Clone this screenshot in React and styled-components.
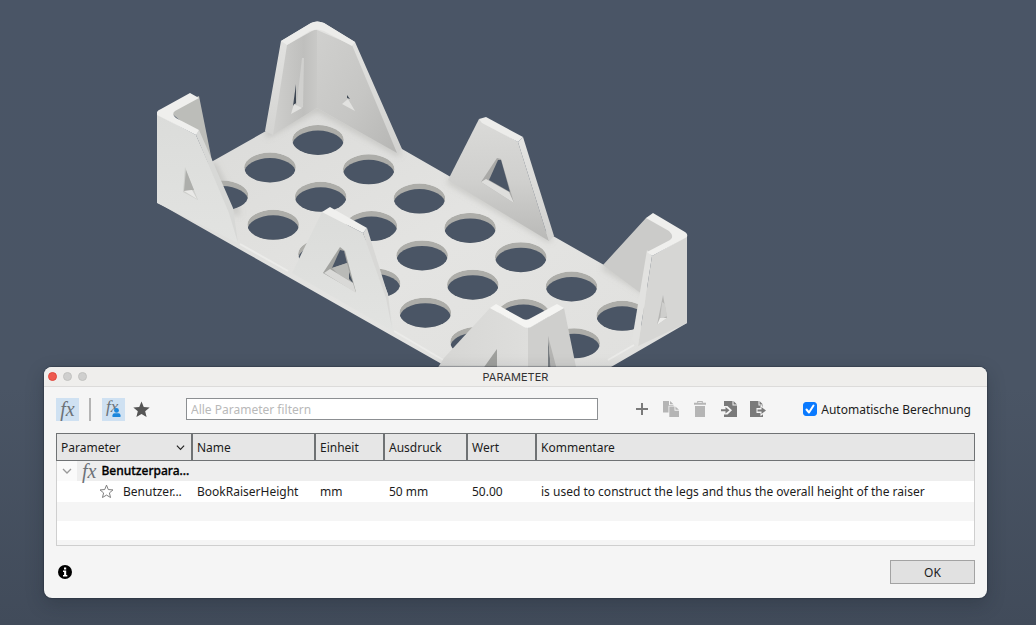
import { useState } from 'react'
import styled, { createGlobalStyle } from 'styled-components'

const GlobalStyle = createGlobalStyle`
	* {
		box-sizing: border-box;
	}
	body {
		margin: 0;
		background: #4a5565;
		font-family: 'Noto Sans', 'Open Sans', sans-serif;
		font-size: 12px;
		color: #1c1c1c;
	}
	button,
	input {
		font: inherit;
		color: inherit;
	}
`

const Viewport = styled.main`
	position: relative;
	min-height: 100vh;
	padding: 0 49px 27px 44px;
	display: flex;
	flex-direction: column;
	justify-content: flex-end;
	overflow: hidden;
	background: linear-gradient(#4a5566 0%, #4a5565 62%, #414b5a 100%);
`

const Model = styled.svg`
	position: absolute;
	top: 0;
	left: 0;
`

const Dialog = styled.section`
	position: relative;
	border-radius: 8px;
	background: #f5f5f5;
	box-shadow: 0 0 1px 1px rgba(30, 36, 48, 0.35), 0 6px 18px rgba(20, 26, 36, 0.25);
	overflow: hidden;
`

const TitleBar = styled.header`
	height: 20px;
	padding: 0 4px;
	display: grid;
	grid-template-columns: 1fr auto 1fr;
	align-items: center;
	background: #efeeec;
	border-bottom: 1px solid #dcdbda;
`

const Lights = styled.div`
	display: flex;
	gap: 6px;
`

const Light = styled.button`
	width: 9px;
	height: 9px;
	padding: 0;
	border: 1px solid ${({ $close }) => ($close ? '#e0483e' : '#c2c2c1')};
	border-radius: 50%;
	background: ${({ $close }) => ($close ? '#ee5a50' : '#cfcfce')};
`

const Title = styled.h1`
	margin: 0;
	font-family: Inter, sans-serif;
	font-size: 11px;
	font-weight: 400;
	line-height: 16px;
	color: #333;
`

const Toolbar = styled.div`
	height: 46px;
	padding: 0 16px 2px 12px;
	display: flex;
	align-items: center;
`

const IconButton = styled.button`
	position: relative;
	flex: none;
	width: 23px;
	height: 23px;
	padding: 0;
	display: grid;
	place-items: ${({ $corner }) => ($corner ? 'start' : 'center')};
	padding-left: ${({ $corner }) => ($corner ? 4 : 0)}px;
	border: 0;
	color: #555;
	background: ${({ $active }) => ($active ? '#cfe1f2' : 'transparent')};
`

const Fx = styled.span`
	font-family: 'Liberation Serif', serif;
	font-style: italic;
	font-size: ${({ $size }) => $size}px;
	font-weight: 400;
	line-height: ${({ $size }) => $size}px;
	color: #6c7278;
`

const UserBadge = styled.svg`
	position: absolute;
	right: 4px;
	bottom: 4px;
`

const Divider = styled.span`
	width: 2px;
	height: 23px;
	margin: 0 11px 0 10px;
	background: #b4b4b4;
`

const Favorites = styled(IconButton)`
	margin-left: 5px;
`

const Filter = styled.input`
	flex: 1;
	min-width: 80px;
	height: 22px;
	margin: 0 32px 0 33px;
	padding: 0 4px;
	border: 1px solid #8c8f92;
	border-radius: 0;
	background: #fff;
	outline: none;
	&::placeholder {
		color: #b9b9b9;
		opacity: 1;
	}
`

const Tools = styled.div`
	display: flex;
	gap: 6px;
	margin-right: 34px;
	button {
		color: #7a7a7a;
	}
	button:disabled {
		color: #b5b5b5;
	}
`

const AutoLabel = styled.label`
	display: flex;
	align-items: center;
	gap: 4px;
	white-space: nowrap;
`

const CheckWrap = styled.span`
	display: grid;
	input,
	svg {
		grid-area: 1 / 1;
	}
	svg {
		pointer-events: none;
	}
`

const Checkbox = styled.input`
	appearance: none;
	width: 14px;
	height: 14px;
	margin: 0;
	border: 1px solid #aaa;
	border-radius: 3px;
	background: #fff;
	&:checked {
		border-color: #0a7aff;
		background: #0a7aff;
	}
`

const TableFrame = styled.div`
	margin: 0 12px;
	height: 113px;
	overflow: hidden;
	border-bottom: 1px solid #cfcfcf;
`

const Table = styled.table`
	width: 100%;
	height: 118px;
	table-layout: fixed;
	border-collapse: separate;
	border-spacing: 0;
	tbody td:first-child {
		border-left: 1px solid #cfcfcf;
	}
	tbody td:last-child {
		border-right: 1px solid #cfcfcf;
	}
`

const HeadCell = styled.th`
	width: ${({ $width }) => $width || 'auto'};
	height: 28px;
	padding: 0 6px 0 4px;
	border: solid #6f7274;
	border-width: 1px 0 1px 2px;
	background: #e6e6e6;
	font-weight: 400;
	text-align: left;
	&:first-child {
		border-left-width: 1px;
	}
	&:last-child {
		border-right-width: 1px;
	}
`

const HeadLabel = styled.span`
	display: flex;
	align-items: center;
	justify-content: space-between;
`

const Row = styled.tr`
	height: ${({ $height }) => $height}px;
	background: ${({ $shade }) => $shade};
`

const Cell = styled.td`
	padding: 0 0 0 6px;
	line-height: 18px;
	white-space: nowrap;
`

const TreeCell = styled.td`
	padding: 0;
	line-height: 18px;
`

const TreeItem = styled.div`
	display: flex;
	align-items: center;
	gap: ${({ $gap }) => $gap}px;
	padding-left: ${({ $indent }) => $indent}px;
`

const GroupName = styled.span`
	font-weight: 500;
	-webkit-text-stroke: 0.3px #000;
	color: #000;
`

const Twisty = styled.button`
	width: 20px;
	height: 20px;
	padding: 0;
	display: grid;
	place-items: center;
	border: 0;
	background: #fafafa;
`

const Footer = styled.footer`
	padding: 14px 12px;
	display: flex;
	align-items: center;
	justify-content: space-between;
`

const InfoButton = styled.button`
	width: 17px;
	height: 17px;
	padding: 0;
	display: grid;
	place-items: center;
	border: 0;
	background: none;
`

const OkButton = styled.button`
	width: 85px;
	height: 24px;
	padding: 0;
	border: 1px solid #a3a3a3;
	background: #e1e1e1;
`

const STAR = 'M8 1.2l1.9 4.7 5 .4-3.8 3.2 1.2 4.9L8 11.8l-4.3 2.6 1.2-4.9L1.1 6.3l5-.4z'

const holes = [
	{ x: 318, y: 140, count: 7 },
	{ x: 270, y: 167.5, count: 7 },
	{ x: 222.5, y: 195.5, count: 6 },
].flatMap(({ x, y, count }) =>
	Array.from({ length: count }, (_, i) => ({ x: x + i * 50.7, y: y + i * 29.3 })),
)

function BookRaiser() {
	return (
		<Model width="1036" height="625" viewBox="0 0 1036 625" aria-hidden="true">
			<defs>
				<linearGradient id="plate" x1="0" y1="0" x2="1" y2="1">
					<stop offset="0" stopColor="#dadad8" />
					<stop offset="0.5" stopColor="#e4e4e2" />
					<stop offset="1" stopColor="#dfdfdd" />
				</linearGradient>
				<linearGradient id="front" x1="0" y1="0" x2="0" y2="1">
					<stop offset="0" stopColor="#dbdcda" />
					<stop offset="1" stopColor="#e2e3e1" />
				</linearGradient>
				<linearGradient id="innerLeft" x1="0" y1="0" x2="1" y2="0">
					<stop offset="0" stopColor="#cfcfcd" />
					<stop offset="0.7" stopColor="#bfbfbd" />
					<stop offset="1" stopColor="#c9c9c7" />
				</linearGradient>
				<linearGradient id="innerRight" x1="0" y1="0" x2="1" y2="1">
					<stop offset="0" stopColor="#d0d0ce" />
					<stop offset="0.55" stopColor="#c6c6c4" />
					<stop offset="1" stopColor="#b6b6b4" />
				</linearGradient>
				<linearGradient id="backWall" x1="0" y1="0" x2="0" y2="1">
					<stop offset="0" stopColor="#dadad8" />
					<stop offset="0.5" stopColor="#d0d0ce" />
					<stop offset="1" stopColor="#b9b9b7" />
				</linearGradient>
				<linearGradient id="wallEdge" x1="0" y1="0" x2="0" y2="1">
					<stop offset="0" stopColor="#e4e4e2" />
					<stop offset="1" stopColor="#d2d2d0" />
				</linearGradient>
				<linearGradient id="cornerFront" x1="0" y1="0" x2="1" y2="0">
					<stop offset="0" stopColor="#d5d5d3" />
					<stop offset="1" stopColor="#dededc" />
				</linearGradient>
				<filter id="soft" x="-20%" y="-20%" width="140%" height="140%">
					<feGaussianBlur stdDeviation="3" />
				</filter>
				<clipPath id="plateClip">
					<path d="M158 203L213 161L266 131L317 106L402 149L449 176L553 236L604 265L687 310V323L529 414Z" />
				</clipPath>
				{holes.map((h, i) => (
					<clipPath key={i} id={`hole${i}`}>
						<ellipse cx={h.x} cy={h.y} rx="25.8" ry="15" />
					</clipPath>
				))}
			</defs>

			{/* base plate */}
			<path d="M158 203L158 190L213 161L266 131L317 106L402 149L449 176L553 236L604 265L687 310V323L611 367L529 414L447 367Z" fill="url(#plate)" />
			<g clipPath="url(#plateClip)">
				<path d="M266 135L317 108L400 154M448 180L551 240M603 266L650 294M212 163L238 215" fill="none" stroke="#8f8f8c" strokeOpacity="0.35" strokeWidth="6" filter="url(#soft)" />
			</g>
			{holes.map((h, i) => (
				<g key={i} clipPath={`url(#hole${i})`}>
					<ellipse cx={h.x} cy={h.y} rx="25.8" ry="15" fill="#adada9" />
					<ellipse cx={h.x} cy={h.y + 5.5} rx="25.8" ry="15" fill="#4a5565" />
				</g>
			))}
			<path d="M240 244L288 271M394 331L445 361M634 345L608 360" fill="none" stroke="#ebebe9" strokeWidth="2" />

			{/* rear corner */}
			<path d="M281 41L311 23Q317 20 324 23L355 42L402 149L397 153L317 108L273 135L265 131Z" fill="url(#wallEdge)" />
			<path d="M287 45L312 31Q317 29 317 30V108L273 135Z" fill="url(#innerLeft)" />
			<path d="M317 30L352 45L397 153L317 108Z" fill="url(#innerRight)" />
			<path d="M281 41L311 23Q317 20 324 23L355 42L352 46L324 31Q317 28 310 31L287 45Z" fill="#ececea" />
			<path d="M302 58L296 110L303 107L304 58Z" fill="#d0d0ce" />
			<path d="M296 84L293 106L296 103Z" fill="#3f4854" />
			<path d="M294 104L302 108L291 114Z" fill="#e2e2e0" />
			<path d="M347 95L350 99L347 98Z" fill="#3f4854" />
			<path d="M348 99L342 104L355 111Z" fill="#e2e2e0" />

			{/* rear middle leg */}
			<path d="M479 119L518 142L549 241L448 180Z" fill="url(#backWall)" />
			<path d="M518 142L523 137L554 236L549 241Z" fill="url(#wallEdge)" />
			<path d="M479 119L486 117L523 137L518 142L482 123Z" fill="#ececea" />
			<path d="M497 158L481 182L514 203L501 159Z" fill="#a9a9a7" />
			<path d="M481 182L486 179L509 192L514 203Z" fill="#dededc" />
			<path d="M498 160L489 180L510 192L501 160Z" fill="#4a5565" />

			{/* left corner */}
			<path d="M199 96L212 161L217 176L196 134L170 112L180 104Z" fill="#bcbdb9" />
			<path d="M157 114L196 135L229 210L238 243L157 203Z" fill="url(#front)" />
			<path d="M196 135L199 130L233 208L238 243L229 213Z" fill="#d7d8d6" />
			<path d="M157 112Q158 110 161 109L190 93L199 98L175 111Q171 114 176 118L199 130L196 135L157 115Z" fill="#efefed" />
			<path d="M185 167L183 192L198 200L194 190Z" fill="#cecfcc" />
			<path d="M186 170L194 190L184 191Z" fill="#adaeab" />
			<path d="M184 191L192 190L197 199Z" fill="#e9e9e7" />

			{/* front middle leg */}
			<path d="M322 212L363 233L388 294L394 332L292 273Z" fill="url(#front)" />
			<path d="M363 233L367 228L388 295L392 328L386 298Z" fill="#d8d8d6" />
			<path d="M322 212L330 207L367 228L363 233Z" fill="#f0f0ee" />
			<path d="M340 247L323 273L356 292L345 251Z" fill="#a2a3a0" />
			<path d="M340 250L332 268L347 263L344 251Z" fill="#4a5565" />
			<path d="M332 268L347 263L352 282L338 274Z" fill="#b9bab7" />
			<path d="M349 272L353 283L349 279Z" fill="#46505d" />
			<path d="M324 273L330 269L353 283L356 293Z" fill="#d9d9d7" />

			{/* right corner */}
			<path d="M646 218L603 265L642 294L650 254L676 240L674 230L653 216Z" fill="#cbcbc9" />
			<path d="M652 256L687 236V323L638 346Z" fill="#d6d6d4" />
			<path d="M647 250L652 256L638 346L632 340Z" fill="#e2e2e0" />
			<path d="M646 218L653 213L685 232Q688 234 687 237L652 256L647 252L670 240Q675 237 669 231Z" fill="#efefed" />
			<path d="M663 295L657 325L667 318Z" fill="#b5b5b3" />
			<path d="M662 302L660 320L667 316L665 304Z" fill="#cececc" />
			<path d="M657 325L660 318L667 318Z" fill="#ececea" />

			{/* front corner */}
			<path d="M490 308L528 328V380H430L444 358Z" fill="url(#cornerFront)" />
			<path d="M528 328L564 308L576 367V380H528Z" fill="#cfcfcd" />
			<path d="M490 308L496 304L523 319Q527 321 531 318L557 304L564 308L531 327Q528 329 524 327Z" fill="#f4f4f2" />
			<path d="M497 349V370H482Z" fill="#9fa09d" />
			<path d="M548 336L551 370H548Z" fill="#777c80" />
			<path d="M548 336L557 370H551Z" fill="#b4b4b2" />
		</Model>
	)
}

function Star({ filled }) {
	return (
		<svg width={filled ? 19 : 15} height={filled ? 19 : 15} viewBox="0 0 16 16" fill={filled ? '#555' : 'none'} stroke={filled ? 'none' : '#777'}>
			<path d={STAR} />
		</svg>
	)
}

function Chevron({ color, size }) {
	return (
		<svg width={size} height={size} viewBox="0 0 10 10" fill="none" stroke={color} strokeWidth="1.3">
			<path d="M1 3l4 4 4-4" />
		</svg>
	)
}

const toolIcons = [
	{ label: 'Neuer Parameter', d: 'M7 2h2v5h5v2H9v5H7V9H2V7h5z' },
	{
		label: 'Kopieren',
		disabled: true,
		d: 'M0 0h6v4h4.500v.8H5.500v6.700H0zM7 0l3.500 3.300H7zM6.300 5.500h5.200v4.200H16V16H6.300zM12.400 5.500L16 8.800h-3.600z',
	},
	{
		label: 'Löschen',
		disabled: true,
		d: 'M5.200 0h5.600v1.700H14v2H2v-2h3.200zM6.200 1v.7h3.600V1zM3 5h10v11H3z',
	},
	{
		label: 'Importieren',
		d: 'M3 0h8.500v4.500H16V16H3v-2.500h3.500L11 9.300 6.500 5H3zM12.500 0L16 3.500h-3.500zM0 8.300h4.500V6L8.500 9.300l-4 3.300v-2.300H0z',
	},
	{
		label: 'Exportieren',
		d: 'M0 0h8.500v4.500H13v1.300l-2.500-2V7H6.500v5h4v3.200l2.500-2V16H0zM9.500 0L13 3.500H9.500zM7.500 8.500h4V6l4.500 3.500-4.500 3.500v-2.500h-4z',
	},
]

const columns = [
	{ label: 'Parameter', width: '135px', sortable: true },
	{ label: 'Name', width: '123px' },
	{ label: 'Einheit', width: '69px' },
	{ label: 'Ausdruck', width: '83px' },
	{ label: 'Wert', width: '69px' },
	{ label: 'Kommentare' },
]

function App() {
	const [filter, setFilter] = useState('')
	const [auto, setAuto] = useState(true)

	return (
		<Viewport>
			<GlobalStyle />
			<BookRaiser />
			<Dialog role="dialog" aria-labelledby="title">
				<TitleBar>
					<Lights>
						<Light $close aria-label="Schließen" />
						<Light aria-label="Minimieren" />
						<Light aria-label="Maximieren" />
					</Lights>
					<Title id="title">PARAMETER</Title>
				</TitleBar>
				<Toolbar>
					<IconButton $active aria-label="Alle Parameter">
						<Fx $size={20}>fx</Fx>
					</IconButton>
					<Divider />
					<IconButton $active $corner aria-label="Benutzerparameter">
						<Fx $size={17}>fx</Fx>
						<UserBadge width="9" height="9" viewBox="0 0 9 9" fill="#1c87dc">
							<circle cx="4.5" cy="2.4" r="2.4" />
							<path d="M.5 9V7.2Q.5 5.300 2.500 5.300h4q2 0 2 1.900V9z" />
						</UserBadge>
					</IconButton>
					<Favorites aria-label="Favoriten">
						<Star filled />
					</Favorites>
					<Filter
						aria-label="Alle Parameter filtern"
						placeholder="Alle Parameter filtern"
						value={filter}
						onChange={(e) => setFilter(e.target.value)}
					/>
					<Tools>
						{toolIcons.map(({ label, disabled, d }) => (
							<IconButton key={label} aria-label={label} disabled={disabled}>
								<svg width="16" height="16" viewBox="0 0 16 16" fill="currentColor" fillRule="evenodd">
									<path d={d} />
								</svg>
							</IconButton>
						))}
					</Tools>
					<AutoLabel>
						<CheckWrap>
							<Checkbox type="checkbox" checked={auto} onChange={(e) => setAuto(e.target.checked)} />
							{auto && (
								<svg width="14" height="14" viewBox="0 0 14 14" fill="none" stroke="#fff" strokeWidth="2" strokeLinecap="round" strokeLinejoin="round">
									<path d="M3.500 7.500l2.500 3 4.500-7" />
								</svg>
							)}
						</CheckWrap>
						Automatische Berechnung
					</AutoLabel>
				</Toolbar>
				<TableFrame>
					<Table>
						<thead>
							<tr>
								{columns.map(({ label, width, sortable }) => (
									<HeadCell key={label} $width={width} scope="col">
										<HeadLabel>
											{label}
											{sortable && <Chevron color="#222" size={9} />}
										</HeadLabel>
									</HeadCell>
								))}
							</tr>
						</thead>
						<tbody>
							<Row $height={20} $shade="#eeeeee">
								<TreeCell colSpan={6}>
									<TreeItem $gap={5} $indent={0}>
										<Twisty aria-label="Zuklappen">
											<Chevron color="#999" size={10} />
										</Twisty>
										<Fx $size={20}>fx</Fx>
										<GroupName>Benutzerpara...</GroupName>
									</TreeItem>
								</TreeCell>
							</Row>
							<Row $height={21} $shade="#ffffff">
								<TreeCell>
									<TreeItem $gap={9} $indent={42}>
										<Star />
										<span>Benutzer...</span>
									</TreeItem>
								</TreeCell>
								<Cell>BookRaiserHeight</Cell>
								<Cell>mm</Cell>
								<Cell>50 mm</Cell>
								<Cell>50.00</Cell>
								<Cell>is used to construct the legs and thus the overall height of the raiser</Cell>
							</Row>
							<Row $height={19} $shade="#f5f5f5">
								<td colSpan={6} />
							</Row>
							<Row $height={19} $shade="#ffffff">
								<td colSpan={6} />
							</Row>
							<Row $height={11} $shade="#f5f5f5">
								<td colSpan={6} />
							</Row>
						</tbody>
					</Table>
				</TableFrame>
				<Footer>
					<InfoButton aria-label="Info">
						<svg width="14" height="14" viewBox="0 0 14 14">
							<circle cx="7" cy="7" r="7" fill="#000" />
							<path d="M6 2.500h2.200v2H6zM5 5.500h3.200v4.600H9.300v1.400H5v-1.400h1.100V6.900H5z" fill="#fff" />
						</svg>
					</InfoButton>
					<OkButton>OK</OkButton>
				</Footer>
			</Dialog>
		</Viewport>
	)
}

export default App
